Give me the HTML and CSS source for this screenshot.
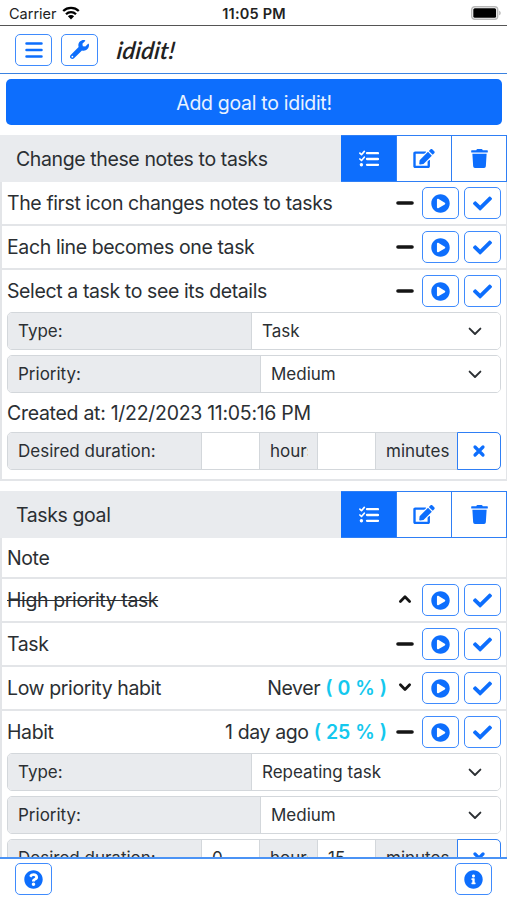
FILE: index.html
```html
<!DOCTYPE html>
<html lang="en">
<head>
<meta charset="utf-8">
<title>ididit!</title>
<link rel="stylesheet" href="styles.css">
</head>
<body>
<svg class="sprite" aria-hidden="true">
  <symbol id="bars" viewBox="0 0 18 18"><path d="M1.500 2.600h15M1.500 9h15M1.500 15.400h15" fill="none" stroke="currentColor" stroke-width="2.500" stroke-linecap="round"/></symbol>
  <symbol id="wrench" viewBox="0 0 512 512"><path d="M507.73 109.1c-2.24-9.03-13.54-12.09-20.12-5.51l-74.36 74.36-67.88-11.31-11.31-67.88 74.36-74.36c6.62-6.62 3.43-17.9-5.66-20.16-47.38-11.74-99.55.91-136.58 37.93-39.64 39.64-50.55 97.1-34.05 147.2L18.74 402.76c-24.99 24.99-24.99 65.51 0 90.5 24.99 24.99 65.51 24.99 90.5 0l213.21-213.21c50.12 16.71 107.47 5.68 147.37-34.22 37.07-37.07 49.7-89.32 37.91-136.73zM64 472c-13.25 0-24-10.75-24-24 0-13.26 10.75-24 24-24s24 10.74 24 24c0 13.25-10.75 24-24 24z"/></symbol>
  <symbol id="list" viewBox="0 0 20 18"><path d="M8 3.2h11M8 9h11M8 14.8h11" fill="none" stroke="currentColor" stroke-width="2.300" stroke-linecap="round"/><path d="M.9 3.200l1.600 1.500L5.300 1.400M.9 9l1.600 1.500L5.300 7.200" fill="none" stroke="currentColor" stroke-width="1.700" stroke-linecap="round" stroke-linejoin="round"/><circle cx="2.400" cy="14.800" r="1.700"/></symbol>
  <symbol id="edit" viewBox="0 0 576 512"><path d="M402.6 83.2l90.2 90.2c3.8 3.8 3.8 10 0 13.8L274.4 405.6l-92.8 10.3c-12.4 1.4-22.9-9.1-21.5-21.5l10.3-92.8L388.8 83.2c3.8-3.8 10-3.8 13.8 0zm162-22.9l-48.8-48.8c-15.2-15.2-39.9-15.2-55.2 0l-35.4 35.4c-3.8 3.8-3.8 10 0 13.8l90.2 90.2c3.8 3.8 10 3.8 13.8 0l35.4-35.4c15.2-15.3 15.2-40 0-55.2zM384 346.2V448H64V128h229.8c3.2 0 6.2-1.3 8.5-3.5l40-40c7.6-7.6 2.2-20.5-8.5-20.5H48C21.5 64 0 85.5 0 112v352c0 26.5 21.5 48 48 48h352c26.5 0 48-21.5 48-48V306.2c0-10.7-12.9-16-20.5-8.5l-40 40c-2.2 2.3-3.5 5.3-3.5 8.5z"/></symbol>
  <symbol id="trash" viewBox="0 0 448 512"><path d="M432 32H312l-9.4-18.7A24 24 0 0 0 281.1 0H166.8a23.72 23.72 0 0 0-21.4 13.3L136 32H16A16 16 0 0 0 0 48v32a16 16 0 0 0 16 16h416a16 16 0 0 0 16-16V48a16 16 0 0 0-16-16zM53.2 467a48 48 0 0 0 47.9 45h245.8a48 48 0 0 0 47.9-45L416 128H32z"/></symbol>
  <symbol id="play" viewBox="0 0 512 512"><path d="M256 8C119 8 8 119 8 256s111 248 248 248 248-111 248-248S393 8 256 8zm115.7 272l-176 101c-15.8 8.8-35.7-2.5-35.7-21V152c0-18.4 19.8-29.8 35.7-21l176 107c16.4 9.2 16.4 32.9 0 42z"/></symbol>
  <symbol id="check" viewBox="0 0 512 512"><path d="M173.898 439.404l-166.4-166.4c-9.997-9.997-9.997-26.206 0-36.204l36.203-36.204c9.997-9.998 26.207-9.998 36.204 0L192 312.69 432.095 72.596c9.997-9.997 26.207-9.997 36.204 0l36.203 36.204c9.997 9.997 9.997 26.206 0 36.204l-294.4 294.401c-9.998 9.997-26.207 9.997-36.204-.001z"/></symbol>
  <symbol id="question" viewBox="0 0 512 512"><path d="M504 256c0 136.997-111.043 248-248 248S8 392.997 8 256C8 119.083 119.043 8 256 8s248 111.083 248 248zM262.655 90c-54.497 0-89.255 22.957-116.549 63.758-3.536 5.286-2.353 12.415 2.715 16.258l34.699 26.31c5.205 3.947 12.621 3.008 16.665-2.122 17.864-22.658 30.113-35.797 57.303-35.797 20.429 0 45.698 13.148 45.698 32.958 0 14.976-12.363 22.667-32.534 33.976C247.128 238.528 216 254.941 216 296v4c0 6.627 5.373 12 12 12h56c6.627 0 12-5.373 12-12v-1.333c0-28.462 83.186-29.647 83.186-106.667 0-58.002-60.165-102-116.531-102zM256 338c-25.365 0-46 20.635-46 46 0 25.364 20.635 46 46 46s46-20.636 46-46c0-25.365-20.635-46-46-46z"/></symbol>
  <symbol id="info" viewBox="0 0 512 512"><path d="M256 8C119.043 8 8 119.083 8 256c0 136.997 111.043 248 248 248s248-111.003 248-248C504 119.083 392.957 8 256 8zm0 110c23.196 0 42 18.804 42 42s-18.804 42-42 42-42-18.804-42-42 18.804-42 42-42zm56 254c0 6.627-5.373 12-12 12h-88c-6.627 0-12-5.373-12-12v-24c0-6.627 5.373-12 12-12h12v-64h-12c-6.627 0-12-5.373-12-12v-24c0-6.627 5.373-12 12-12h64c6.627 0 12 5.373 12 12v100h12c6.627 0 12 5.373 12 12v24z"/></symbol>
  <symbol id="minus" viewBox="0 0 18 18"><path d="M2 9h14" fill="none" stroke="currentColor" stroke-width="3.600" stroke-linecap="round"/></symbol>
  <symbol id="up" viewBox="0 0 18 18"><path d="M4.400 10.400L9 5.800l4.600 4.600" fill="none" stroke="currentColor" stroke-width="2.800" stroke-linecap="round" stroke-linejoin="round"/></symbol>
  <symbol id="down" viewBox="0 0 18 18"><path d="M4.400 5.800L9 10.400l4.600-4.600" fill="none" stroke="currentColor" stroke-width="2.800" stroke-linecap="round" stroke-linejoin="round"/></symbol>
  <symbol id="caret" viewBox="0 0 14 14"><path d="M1.600 4.600L7 10l5.400-5.400" fill="none" stroke="currentColor" stroke-width="1.900" stroke-linecap="round" stroke-linejoin="round"/></symbol>
  <symbol id="times" viewBox="0 0 14 14"><path d="M3 3l8 8M11 3l-8 8" fill="none" stroke="currentColor" stroke-width="3.200" stroke-linecap="round"/></symbol>
  <symbol id="wifi" viewBox="0 0 18 14"><path d="M1.200 5a11.200 11.200 0 0 1 15.600 0M4 8.200a7.100 7.100 0 0 1 10 0" fill="none" stroke="currentColor" stroke-width="2.300"/><path d="M5.900 10.300a4.400 4.400 0 0 1 6.200 0L9 13.500z"/></symbol>
  <symbol id="battery" viewBox="0 0 30 14"><rect x=".7" y=".7" width="26" height="12.600" rx="3" fill="#fff" stroke="#b8b8b8" stroke-width="1.400"/><rect x="2.300" y="2.300" width="22.800" height="9.400" rx="1.500" fill="#000"/><path d="M28.200 4.700v4.600c2-.7 2-3.900 0-4.600z" fill="#b8b8b8"/></symbol>
</svg>

<div class="app">
  <div class="status">
    <span class="carrier">Carrier <svg class="wifi"><use href="#wifi"/></svg></span>
    <span class="clock">11:05 PM</span>
    <svg class="battery"><use href="#battery"/></svg>
  </div>
  <header class="topbar">
    <button class="btn"><svg class="i18"><use href="#bars"/></svg></button>
    <button class="btn"><svg class="i19"><use href="#wrench"/></svg></button>
    <span class="brand">ididit!</span>
  </header>

  <main class="content">
    <button class="add">Add goal to ididit!</button>

    <section class="goal">
      <div class="goal-head">
        <h2>Change these notes to tasks</h2>
        <button class="tool active"><svg class="i20"><use href="#list"/></svg></button>
        <button class="tool"><svg class="i22"><use href="#edit"/></svg></button>
        <button class="tool"><svg class="i19"><use href="#trash"/></svg></button>
      </div>
      <div class="task"><span class="name">The first icon changes notes to tasks</span><svg class="mark"><use href="#minus"/></svg><button class="btn"><svg class="i19"><use href="#play"/></svg></button><button class="btn"><svg class="i19"><use href="#check"/></svg></button></div>
      <div class="task"><span class="name">Each line becomes one task</span><svg class="mark"><use href="#minus"/></svg><button class="btn"><svg class="i19"><use href="#play"/></svg></button><button class="btn"><svg class="i19"><use href="#check"/></svg></button></div>
      <div class="task open"><span class="name">Select a task to see its details</span><svg class="mark"><use href="#minus"/></svg><button class="btn"><svg class="i19"><use href="#play"/></svg></button><button class="btn"><svg class="i19"><use href="#check"/></svg></button></div>
      <div class="details">
        <div class="group type"><label>Type:</label><div class="select">Task<svg class="caret"><use href="#caret"/></svg></div></div>
        <div class="group priority"><label>Priority:</label><div class="select">Medium<svg class="caret"><use href="#caret"/></svg></div></div>
        <p class="created">Created at: 1/22/2023 11:05:16 PM</p>
        <div class="group duration"><label>Desired duration:</label><div class="field"></div><label class="hours"><span>hours</span></label><div class="field"></div><label class="unit">minutes</label><button class="clear"><svg class="x"><use href="#times"/></svg></button></div>
      </div>
    </section>

    <section class="goal">
      <div class="goal-head">
        <h2>Tasks goal</h2>
        <button class="tool active"><svg class="i20"><use href="#list"/></svg></button>
        <button class="tool"><svg class="i22"><use href="#edit"/></svg></button>
        <button class="tool"><svg class="i19"><use href="#trash"/></svg></button>
      </div>
      <div class="task note"><span class="name">Note</span></div>
      <div class="task"><span class="name"><s>High priority task</s></span><svg class="mark"><use href="#up"/></svg><button class="btn"><svg class="i19"><use href="#play"/></svg></button><button class="btn"><svg class="i19"><use href="#check"/></svg></button></div>
      <div class="task"><span class="name">Task</span><svg class="mark"><use href="#minus"/></svg><button class="btn"><svg class="i19"><use href="#play"/></svg></button><button class="btn"><svg class="i19"><use href="#check"/></svg></button></div>
      <div class="task"><span class="name">Low priority habit</span><span class="ago">Never <b>( 0 % )</b></span><svg class="mark"><use href="#down"/></svg><button class="btn"><svg class="i19"><use href="#play"/></svg></button><button class="btn"><svg class="i19"><use href="#check"/></svg></button></div>
      <div class="task open"><span class="name">Habit</span><span class="ago">1 day ago <b>( 25 % )</b></span><svg class="mark"><use href="#minus"/></svg><button class="btn"><svg class="i19"><use href="#play"/></svg></button><button class="btn"><svg class="i19"><use href="#check"/></svg></button></div>
      <div class="details">
        <div class="group type"><label>Type:</label><div class="select">Repeating task<svg class="caret"><use href="#caret"/></svg></div></div>
        <div class="group priority"><label>Priority:</label><div class="select">Medium<svg class="caret"><use href="#caret"/></svg></div></div>
        <div class="group duration"><label>Desired duration:</label><div class="field">0</div><label class="hours"><span>hours</span></label><div class="field">15</div><label class="unit">minutes</label><button class="clear"><svg class="x"><use href="#times"/></svg></button></div>
      </div>
    </section>
  </main>

  <footer class="bottombar">
    <button class="btn"><svg class="i19"><use href="#question"/></svg></button>
    <button class="btn"><svg class="i19"><use href="#info"/></svg></button>
  </footer>
</div>
</body>
</html>
```
FILE: styles.css
```css
* { box-sizing: border-box; }
body { margin: 0; background: #fff; color: #2b2f33; font: 19.5px/28px Inter, "Liberation Sans", sans-serif; letter-spacing: -0.39px; }
button { font: inherit; letter-spacing: inherit; padding: 0; margin: 0; cursor: pointer; }
svg { display: block; flex: none; fill: currentColor; }
.sprite { display: none; }
.i18 { width: 18px; height: 18px; }
.i19 { width: 19px; height: 19px; }
.i20 { width: 20px; height: 18px; }
.i22 { width: 22px; height: 19px; }

.app { display: flex; flex-direction: column; height: 900px; overflow: hidden; }

.status { flex: none; display: grid; grid-template-columns: 1fr auto 1fr; align-items: center; height: 26px; padding: 2px 6px 0 9px; border-bottom: 1px solid #555; color: #222; font-size: 14.5px; line-height: 22px; letter-spacing: 0; }
.carrier { display: flex; align-items: center; gap: 6px; }
.wifi { width: 18px; height: 14px; margin: -2px 0 0 -1px; color: #000; }
.clock { margin-left: -2px; font-weight: 600; letter-spacing: 0.2px; }
.battery { justify-self: end; width: 30px; height: 14px; margin-top: -2px; }

.topbar { flex: none; display: flex; align-items: center; gap: 9px; height: 48px; padding: 0 15px; border-bottom: 1px solid #3b82e0; }
.brand { margin-left: 10px; color: #222; font: italic 600 24px/30px Lato, sans-serif; letter-spacing: 0.1px; transform: skewX(-7deg); }

.btn { flex: none; display: flex; align-items: center; justify-content: center; width: 37px; height: 32px; border: 1px solid #3f8bfd; border-radius: 5px; background: #fff; color: #0d6efd; }

.content { flex: 1; min-height: 0; overflow: hidden; padding-top: 5px; }
.add { display: block; width: 496px; height: 46px; margin: 0 0 10px 6px; padding-top: 2px; border: 0; border-radius: 5px; background: #0d6efd; color: #e9f2ff; letter-spacing: -0.3px; }

.goal { margin-bottom: 10px; border: solid #e3e5e8; border-width: 0 1px 2px 2px; }
.goal-head { display: flex; height: 47px; margin: 0 -1px 0 -2px; background: #e9ebee; }
.goal-head h2 { flex: 1; margin: 0; padding-left: 16px; font: inherit; line-height: 48px; }
.tool { display: flex; align-items: center; justify-content: center; width: 55px; border: 1px solid #2f7ff5; border-left-width: 0; background: #fff; color: #0d6efd; }
.tool.active { width: 56px; background: #0d6efd; color: #fff; }

.task { display: flex; align-items: center; gap: 5px; height: 44px; padding: 0 5px; border-bottom: 2px solid #e3e5e8; }
.task.open { border-bottom: 0; height: 42px; }
.task.note { height: 41px; }
.name { flex: 1; white-space: nowrap; }
.ago { margin-right: 4px; white-space: nowrap; }
.ago b { color: #14c8ee; font-weight: 600; letter-spacing: 0; }
.mark { width: 18px; height: 18px; margin-right: 3px; color: #151515; }

.details { padding: 0 5px 9px; font-size: 17px; letter-spacing: 0; }
.group { display: flex; height: 38px; margin-bottom: 5px; border: 1px solid #d3d7db; border-radius: 5px; line-height: 36px; }
.group label { flex: none; padding-left: 10px; background: #e9ebee; border-right: 1px solid #d3d7db; overflow: hidden; white-space: nowrap; }
.group label:first-child { border-radius: 4px 0 0 4px; }
.type label { width: 244px; }
.priority label { width: 253px; }
.select { flex: 1; display: flex; align-items: center; justify-content: space-between; padding: 0 18px 0 10px; border-radius: 0 4px 4px 0; background: #fff; }
.caret { width: 14px; height: 14px; }
.created { margin: 0; height: 34px; padding-top: 1px; font-size: 19.5px; letter-spacing: -0.29px; }
.duration { margin: 0; }
.duration label:first-child { width: 194px; }
.field { width: 58px; padding-left: 10px; border-right: 1px solid #d3d7db; }
.group .hours { width: 58px; }
.hours span { display: block; width: 38px; overflow: hidden; }
.duration .unit { flex: 1; border: 0; }
.clear { display: flex; align-items: center; justify-content: center; width: 44px; margin: -1px; border: 1px solid #2f7ff5; border-radius: 0 5px 5px 0; background: #fff; color: #0d6efd; }
.x { width: 14px; height: 14px; }

.bottombar { flex: none; display: flex; justify-content: space-between; height: 43px; padding: 4px 15px 0; border-top: 2px solid #4b93f5; background: #fff; }
```
